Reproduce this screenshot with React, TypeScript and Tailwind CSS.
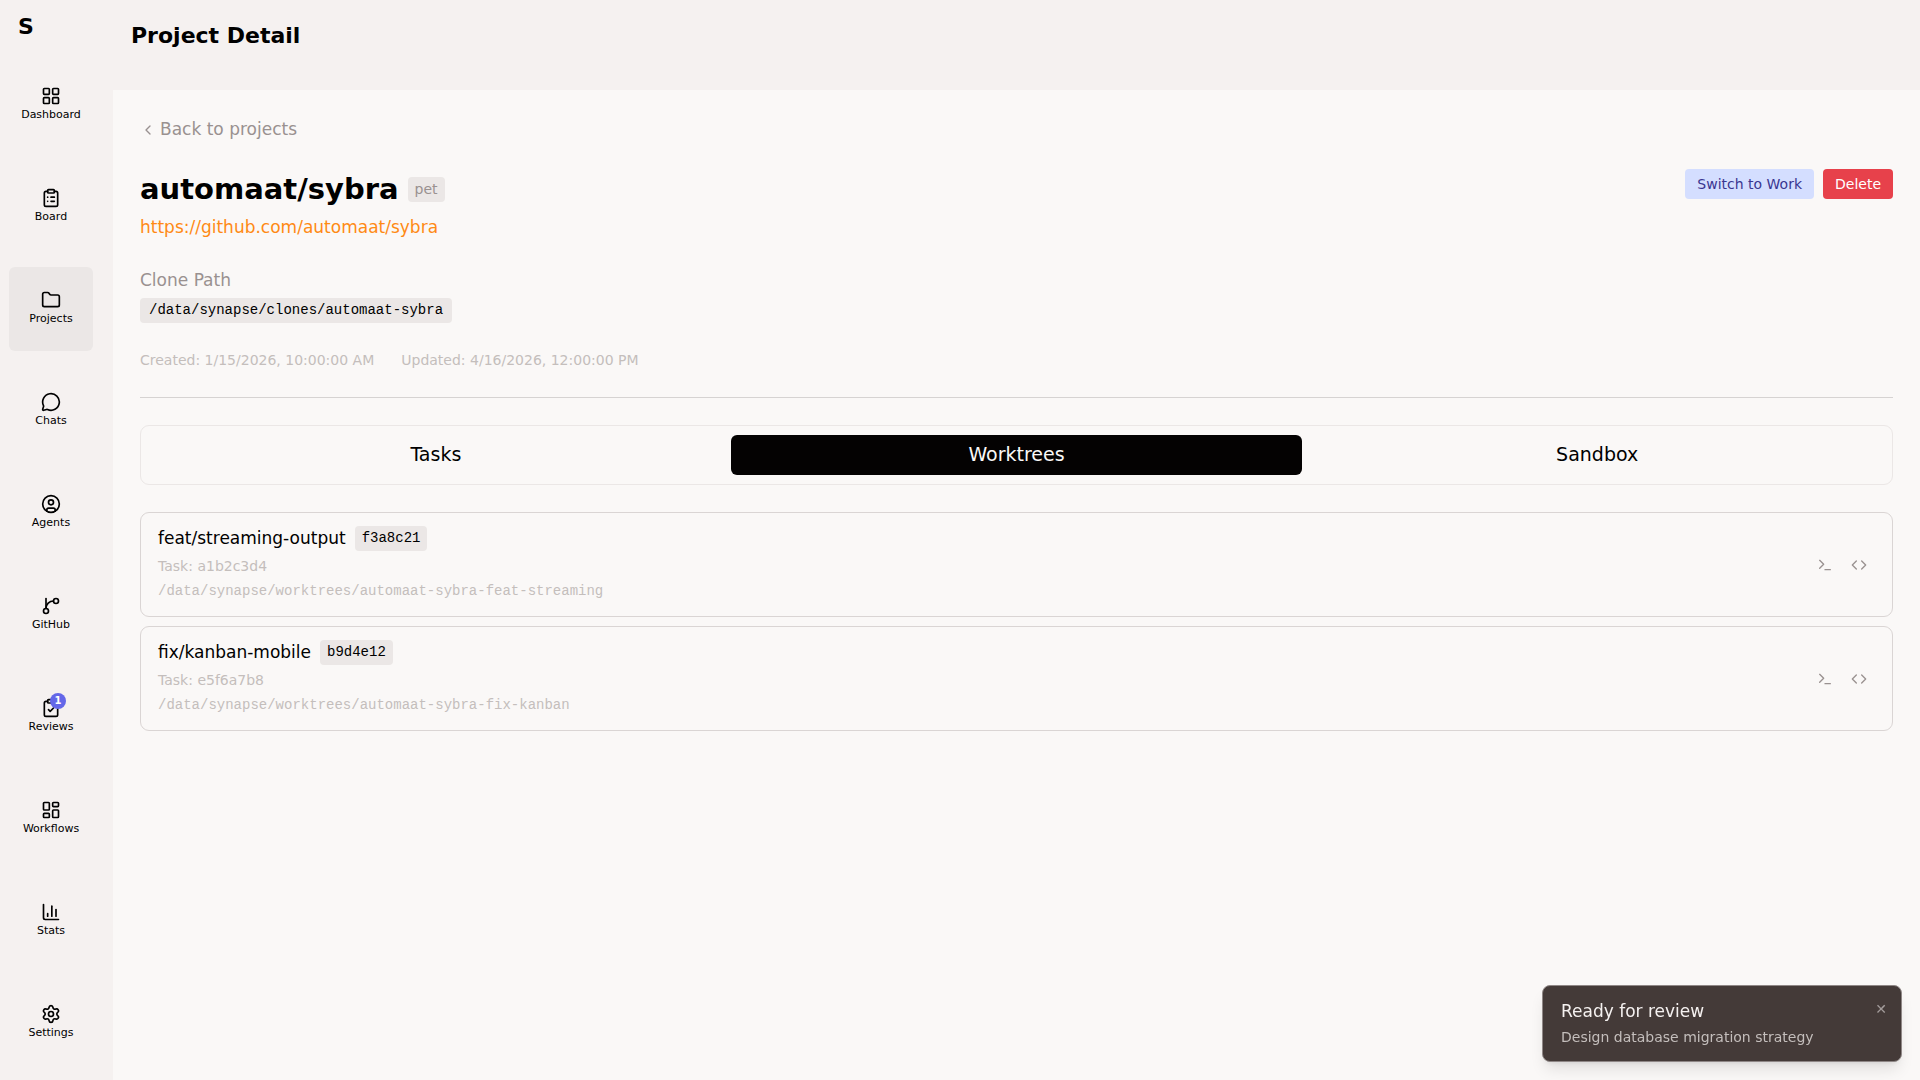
import {
  ChartColumn,
  ChevronLeft,
  CircleUser,
  ClipboardCheck,
  ClipboardList,
  Code,
  Folder,
  LayoutDashboard,
  LayoutGrid,
  MessageCircle,
  Settings,
  Terminal,
} from "lucide-react";

function BranchIcon({ size = 20 }: { size?: number }) {
  return (
    <svg
      width={size}
      height={size}
      viewBox="0 0 24 24"
      fill="none"
      stroke="currentColor"
      strokeWidth={2}
      strokeLinecap="round"
      strokeLinejoin="round"
    >
      <path d="M6 3v12" />
      <circle cx="18" cy="6" r="3" />
      <circle cx="6" cy="18" r="3" />
      <path d="M15 6a9 9 0 0 0-9 9" />
    </svg>
  );
}

const navItems = [
  { label: "Dashboard", icon: LayoutGrid },
  { label: "Board", icon: ClipboardList },
  { label: "Projects", icon: Folder, active: true },
  { label: "Chats", icon: MessageCircle },
  { label: "Agents", icon: CircleUser },
  { label: "GitHub", icon: BranchIcon },
  { label: "Reviews", icon: ClipboardCheck, badge: 1 },
  { label: "Workflows", icon: LayoutDashboard },
  { label: "Stats", icon: ChartColumn },
  { label: "Settings", icon: Settings },
];

const tabs = ["Tasks", "Worktrees", "Sandbox"];

const worktrees = [
  {
    branch: "feat/streaming-output",
    commit: "f3a8c21",
    task: "a1b2c3d4",
    path: "/data/synapse/worktrees/automaat-sybra-feat-streaming",
  },
  {
    branch: "fix/kanban-mobile",
    commit: "b9d4e12",
    task: "e5f6a7b8",
    path: "/data/synapse/worktrees/automaat-sybra-fix-kanban",
  },
];

function Sidebar() {
  return (
    <aside className="flex w-[113px] shrink-0 flex-col pr-5 pl-[9px]">
      <div className="px-[9px] pt-3 text-[22px] leading-[30px] font-bold">S</div>
      <nav className="mt-[21px] flex flex-col gap-[18px]">
        {navItems.map(({ label, icon: Icon, active, badge }) => (
          <a
            key={label}
            href="#"
            className={`flex h-[84px] flex-col items-center justify-center rounded-md ${
              active ? "bg-[#ebe7e6]" : ""
            }`}
          >
            <span className="relative">
              <Icon size={20} />
              {badge && (
                <span className="absolute -top-[5px] -right-[5px] flex size-4 items-center justify-center rounded-full bg-[#6467e8] text-[10px] leading-none font-bold text-white">
                  {badge}
                </span>
              )}
            </span>
            <span className="text-[11px] leading-[18px]">{label}</span>
          </a>
        ))}
      </nav>
    </aside>
  );
}

function Worktree({ branch, commit, task, path }: (typeof worktrees)[number]) {
  return (
    <li className="flex items-center justify-between rounded-[9px] border border-[#dad5d4] pt-3 pr-4 pb-3 pl-[17px]">
      <div>
        <div className="flex items-center gap-[9px]">
          <span className="text-[17px] leading-[26px]">{branch}</span>
          <code className="rounded bg-[#ebe7e6] px-[7px] font-['Liberation_Mono',monospace] text-[14px] leading-[25px]">
            {commit}
          </code>
        </div>
        <p className="mt-[3px] text-[14px] leading-6 text-[#c4bebc]">Task: {task}</p>
        <p className="font-['Liberation_Mono',monospace] text-[14px] leading-[26px] text-[#c4bebc]">{path}</p>
      </div>
      <div className="flex text-[#999190]">
        <button type="button" aria-label="Open terminal" className="px-[9px] py-1">
          <Terminal size={16} />
        </button>
        <button type="button" aria-label="Open in editor" className="px-[9px] py-1">
          <Code size={16} />
        </button>
      </div>
    </li>
  );
}

function Toast() {
  return (
    <div
      role="status"
      className="fixed right-[18px] bottom-[18px] flex w-[360px] items-start justify-between rounded-lg border border-[#8f8786] bg-[#443a38] pt-3 pr-3 pb-[11px] pl-[18px] shadow-lg"
    >
      <div>
        <p className="text-[17px] leading-[26px] text-[#f5f1f0]">Ready for review</p>
        <p className="text-[14px] leading-[26px] text-[#c4bebc]">Design database migration strategy</p>
      </div>
      <button type="button" aria-label="Dismiss" className="px-0.5 text-[14px] leading-[22px] text-[#a39c9b]">
        ✕
      </button>
    </div>
  );
}

export default function App() {
  return (
    <div className="flex min-h-screen bg-[#f5f1f0] font-['DejaVu_Sans',sans-serif] text-black">
      <Sidebar />
      <div className="flex min-w-0 flex-1 flex-col">
        <header className="h-[90px] px-[18px] pt-[18px]">
          <h1 className="text-[22px] leading-9 font-bold">Project Detail</h1>
        </header>

        <main className="flex-1 bg-[#faf8f7] p-[27px]">
          <button type="button" className="flex h-[26px] items-center gap-1 text-[17px] text-[#999190]">
            <ChevronLeft size={16} />
            Back to projects
          </button>

          <div className="mt-[26px] flex items-start justify-between">
            <div>
              <div className="flex items-center gap-[9px]">
                <h2 className="text-[29px] leading-10 font-bold">automaat/sybra</h2>
                <span className="rounded bg-[#ebe7e6] px-[7px] text-[14px] leading-[25px] text-[#999190]">
                  pet
                </span>
              </div>
              <a href="#" className="mt-[5px] block text-[17px] leading-[26px] text-[#ff8a14]">
                https://github.com/automaat/sybra
              </a>
            </div>
            <div className="flex gap-[9px]">
              <button type="button" className="rounded bg-[#d4deff] px-3 text-[14px] leading-[30px] text-[#3a3691]">
                Switch to Work
              </button>
              <button type="button" className="rounded bg-[#e7414b] px-3 text-[14px] leading-[30px] text-white">
                Delete
              </button>
            </div>
          </div>

          <p className="mt-[27px] text-[17px] leading-[26px] text-[#999190]">Clone Path</p>
          <code className="mt-[5px] block w-fit rounded bg-[#ebe7e6] px-[9px] font-['Liberation_Mono',monospace] text-[14px] leading-[25px]">
            /data/synapse/clones/automaat-sybra
          </code>

          <div className="mt-[27px] flex gap-[27px] text-[14px] leading-5 text-[#c4bebc]">
            <span>Created: 1/15/2026, 10:00:00 AM</span>
            <span>Updated: 4/16/2026, 12:00:00 PM</span>
          </div>

          <hr className="mt-[27px] border-[#d6d3d2]" />

          <div role="tablist" className="mt-[27px] flex gap-[9px] rounded-[9px] border border-[#ebe7e6] p-[9px]">
            {tabs.map((tab) => (
              <button
                key={tab}
                type="button"
                role="tab"
                aria-selected={tab === "Worktrees"}
                className={`flex-1 rounded-md pb-0.5 text-[19px] leading-[38px] ${
                  tab === "Worktrees" ? "bg-[#040202] text-[#faf8f7]" : ""
                }`}
              >
                {tab}
              </button>
            ))}
          </div>

          <ul className="mt-[27px] flex flex-col gap-[9px]">
            {worktrees.map((worktree) => (
              <Worktree key={worktree.commit} {...worktree} />
            ))}
          </ul>
        </main>
      </div>
      <Toast />
    </div>
  );
}
